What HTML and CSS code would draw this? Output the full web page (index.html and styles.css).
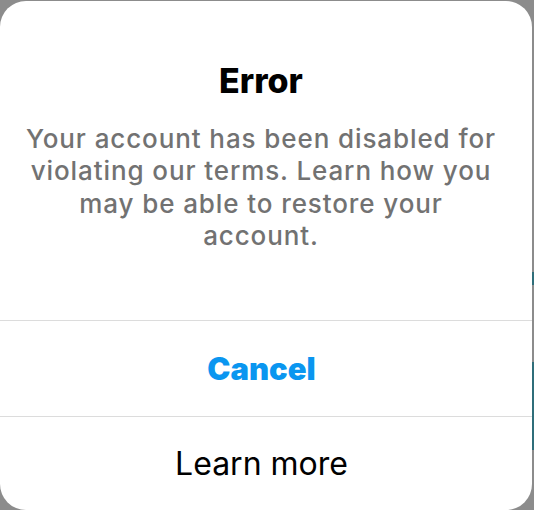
FILE: index.html
```html
<!DOCTYPE html>
<html lang="en">
<head>
<meta charset="utf-8">
<title>Error</title>
<link rel="stylesheet" href="styles.css">
</head>
<body>
<div class="backdrop">
  <div class="dialog" role="alertdialog">
    <div class="content">
      <h2 class="title">Error</h2>
      <p class="message">Your account has been disabled for<br>violating our terms. Learn how you<br>may be able to restore your<br>account.</p>
    </div>
    <button class="action action-cancel">Cancel</button>
    <button class="action action-learn">Learn more</button>
  </div>
</div>
</body>
</html>
```
FILE: styles.css
```css
html, body {
  margin: 0;
  padding: 0;
  width: 534px;
  height: 510px;
  overflow: hidden;
}
body {
  background: #8c8c8c;
  font-family: "Inter", "Noto Sans", sans-serif;
}
.backdrop {
  width: 534px;
  height: 510px;
  background:
    linear-gradient(to bottom,
      transparent 0, transparent 272px,
      #2f6e7a 272px, #2f6e7a 285px,
      transparent 285px, transparent 362px,
      #2f6e7a 362px, #2f6e7a 450px,
      transparent 450px) right top / 2px 100% no-repeat,
    #8c8c8c;
  padding-top: 1px;
  box-sizing: border-box;
}
.dialog {
  width: 532px;
  height: 509px;
  background: #ffffff;
  border-radius: 26px;
  display: flex;
  flex-direction: column;
  overflow: hidden;
}
.content {
  height: 320px;
  box-sizing: border-box;
  padding: 60px 18px 0 8px;
  text-align: center;
  border-bottom: 1px solid #dcdcdc;
}
.title {
  margin: 0;
  font-size: 34px;
  line-height: 40px;
  font-weight: 800;
  color: #000;
}
.message {
  margin: 22px 0 0;
  font-size: 26px;
  line-height: 32.3px;
  font-weight: 500;
  letter-spacing: 0.9px;
  color: #727272;
}
.action {
  display: flex;
  align-items: center;
  justify-content: center;
  border: 0;
  background: transparent;
  font-family: inherit;
  padding: 0 9px 0 0;
  margin: 0;
}
.action-cancel {
  height: 96px;
  border-bottom: 1px solid #dcdcdc;
  font-size: 31px;
  font-weight: 900;
  color: #0a96f0;
}
.action-learn {
  flex: 1;
  font-size: 32px;
  font-weight: 400;
  color: #000;
}
```
